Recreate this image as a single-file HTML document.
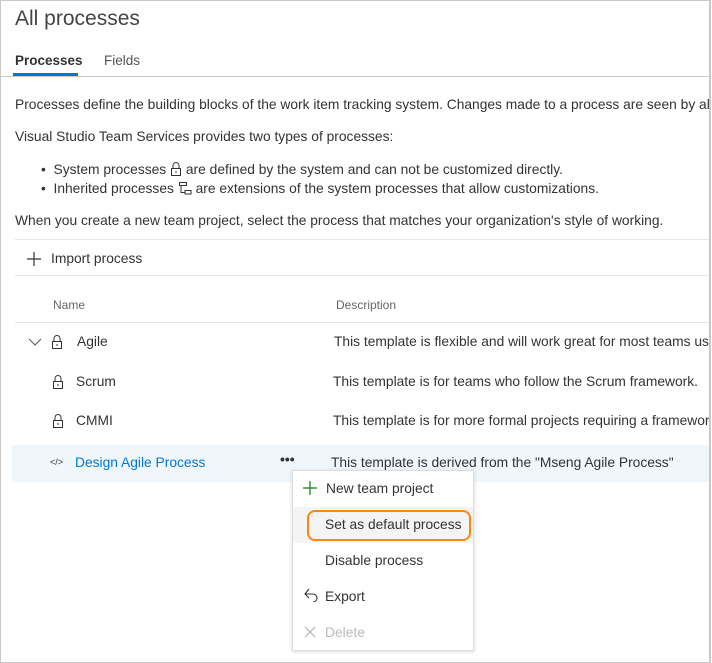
<!DOCTYPE html>
<html><head><meta charset="utf-8"><style>
*{margin:0;padding:0;box-sizing:border-box}
body{width:712px;height:663px;overflow:hidden;background:#fff;font-family:"Liberation Sans",sans-serif;color:#333;font-size:13.8px;position:relative}
.frame{position:absolute;left:0;top:0;width:711px;height:663px;border:1px solid #c8c8c8;border-right:2px solid #c8c8c8;overflow:hidden}
.a{position:absolute;white-space:nowrap}
.hl{position:absolute;height:1px;background:#e6e6e6}
</style></head><body><div class="frame">
<div class="a" style="left:14px;top:6px;font-size:21px;color:#444">All processes</div>
<div class="a" style="left:14px;top:52px;font-weight:bold;color:#333;font-size:13.5px">Processes</div>
<div class="a" style="left:103px;top:52px;color:#555;font-size:13.5px">Fields</div>
<div class="a" style="left:12px;top:72px;width:65px;height:3px;background:#0078d4"></div>
<div class="hl" style="left:0;top:75px;width:712px;background:#c8c8c8"></div>
<div class="a" style="left:14px;top:96px">Processes define the building blocks of the work item tracking system. Changes made to a process are seen by all</div>
<div class="a" style="left:14px;top:128px">Visual Studio Team Services provides two types of processes:</div>
<div class="a" style="left:40px;top:161px">•&nbsp; System processes <svg width="12" height="14" viewBox="0 0 12 14" style="vertical-align:-2px"><path d="M3 6V3.5a3 3 0 0 1 6 0V6M1.5 6.5h9v7h-9z M6 9v2" fill="none" stroke="#333"/></svg> are defined by the system and can not be customized directly.</div>
<div class="a" style="left:40px;top:180px">•&nbsp; Inherited processes <svg width="14" height="14" viewBox="0 0 14 14" style="vertical-align:-2px"><path d="M1.5 1.5h7v3h-7z M3 4.5v7h4 M7 9.5h6v3.5H7z" fill="none" stroke="#333"/></svg> are extensions of the system processes that allow customizations.</div>
<div class="a" style="left:14px;top:212px">When you create a new team project, select the process that matches your organization's style of working.</div>
<div class="hl" style="left:14px;top:238px;width:698px"></div>
<svg class="a" style="left:25px;top:250px" width="16" height="16"><path d="M8 1v14M1 8h14" stroke="#333" stroke-width="1.2"/></svg>
<div class="a" style="left:50px;top:250px">Import process</div>
<div class="hl" style="left:14px;top:274px;width:698px"></div>
<div class="a" style="left:52px;top:297px;font-size:12px;color:#666">Name</div>
<div class="a" style="left:335px;top:297px;font-size:12px;color:#666">Description</div>
<div class="hl" style="left:14px;top:321px;width:698px"></div>
<svg class="a" style="left:27px;top:336px" width="14" height="10"><path d="M1 2l6 6 6-6" fill="none" stroke="#555"/></svg>
<svg class="a" style="left:50px;top:334px" width="12" height="14" viewBox="0 0 12 14"><path d="M3 6V3.5a3 3 0 0 1 6 0V6M1.5 6.5h9v7h-9z M6 9v2" fill="none" stroke="#333"/></svg>
<div class="a" style="left:76px;top:333px">Agile</div>
<div class="a" style="left:333px;top:333px">This template is flexible and will work great for most teams using</div>
<svg class="a" style="left:51px;top:374px" width="12" height="14" viewBox="0 0 12 14"><path d="M3 6V3.5a3 3 0 0 1 6 0V6M1.5 6.5h9v7h-9z M6 9v2" fill="none" stroke="#333"/></svg>
<div class="a" style="left:75px;top:373px">Scrum</div>
<div class="a" style="left:332px;top:373px">This template is for teams who follow the Scrum framework.</div>
<svg class="a" style="left:51px;top:413px" width="12" height="14" viewBox="0 0 12 14"><path d="M3 6V3.5a3 3 0 0 1 6 0V6M1.5 6.5h9v7h-9z M6 9v2" fill="none" stroke="#333"/></svg>
<div class="a" style="left:75px;top:412px">CMMI</div>
<div class="a" style="left:332px;top:412px">This template is for more formal projects requiring a framework</div>
<div class="a" style="left:11px;top:444px;width:701px;height:37px;background:#eff6fc"></div>
<div class="a" style="left:49px;top:456px;font-size:9px;color:#333">&lt;/&gt;</div>
<div class="a" style="left:74px;top:454px;color:#0078d4">Design Agile Process</div>
<div class="a" style="left:279px;top:450px;font-weight:bold;font-size:14px">•••</div>
<div class="a" style="left:330px;top:454px">This template is derived from the "Mseng Agile Process"</div>
<div class="a" style="left:291px;top:469px;width:182px;height:181px;background:#fff;border:1px solid #ddd;box-shadow:0 1px 4px rgba(0,0,0,.15)">
<div class="a" style="left:0;top:36px;width:180px;height:36px;background:#f4f4f4"></div>
<svg class="a" style="left:10px;top:10px" width="14" height="14"><path d="M7 0v14M0 7h14" stroke="#107c10" stroke-width="1.2"/></svg>
<div class="a" style="left:33px;top:10px">New team project</div>
<div class="a" style="left:14px;top:39px;width:164px;height:31px;border:2px solid #f7890f;border-radius:8px"></div>
<div class="a" style="left:32px;top:46px">Set as default process</div>
<div class="a" style="left:32px;top:82px">Disable process</div>
<svg class="a" style="left:10px;top:117px" width="16" height="14"><path d="M6 1l-4 5 4 4M2 6h8a4 4 0 0 1 0 8" fill="none" stroke="#333" stroke-width="1.1"/></svg>
<div class="a" style="left:32px;top:118px">Export</div>
<svg class="a" style="left:11px;top:155px" width="12" height="12"><path d="M1 1l10 10M11 1L1 11" stroke="#bbb" stroke-width="1.3"/></svg>
<div class="a" style="left:32px;top:154px;color:#bbb">Delete</div>
</div>
</div></body></html>
